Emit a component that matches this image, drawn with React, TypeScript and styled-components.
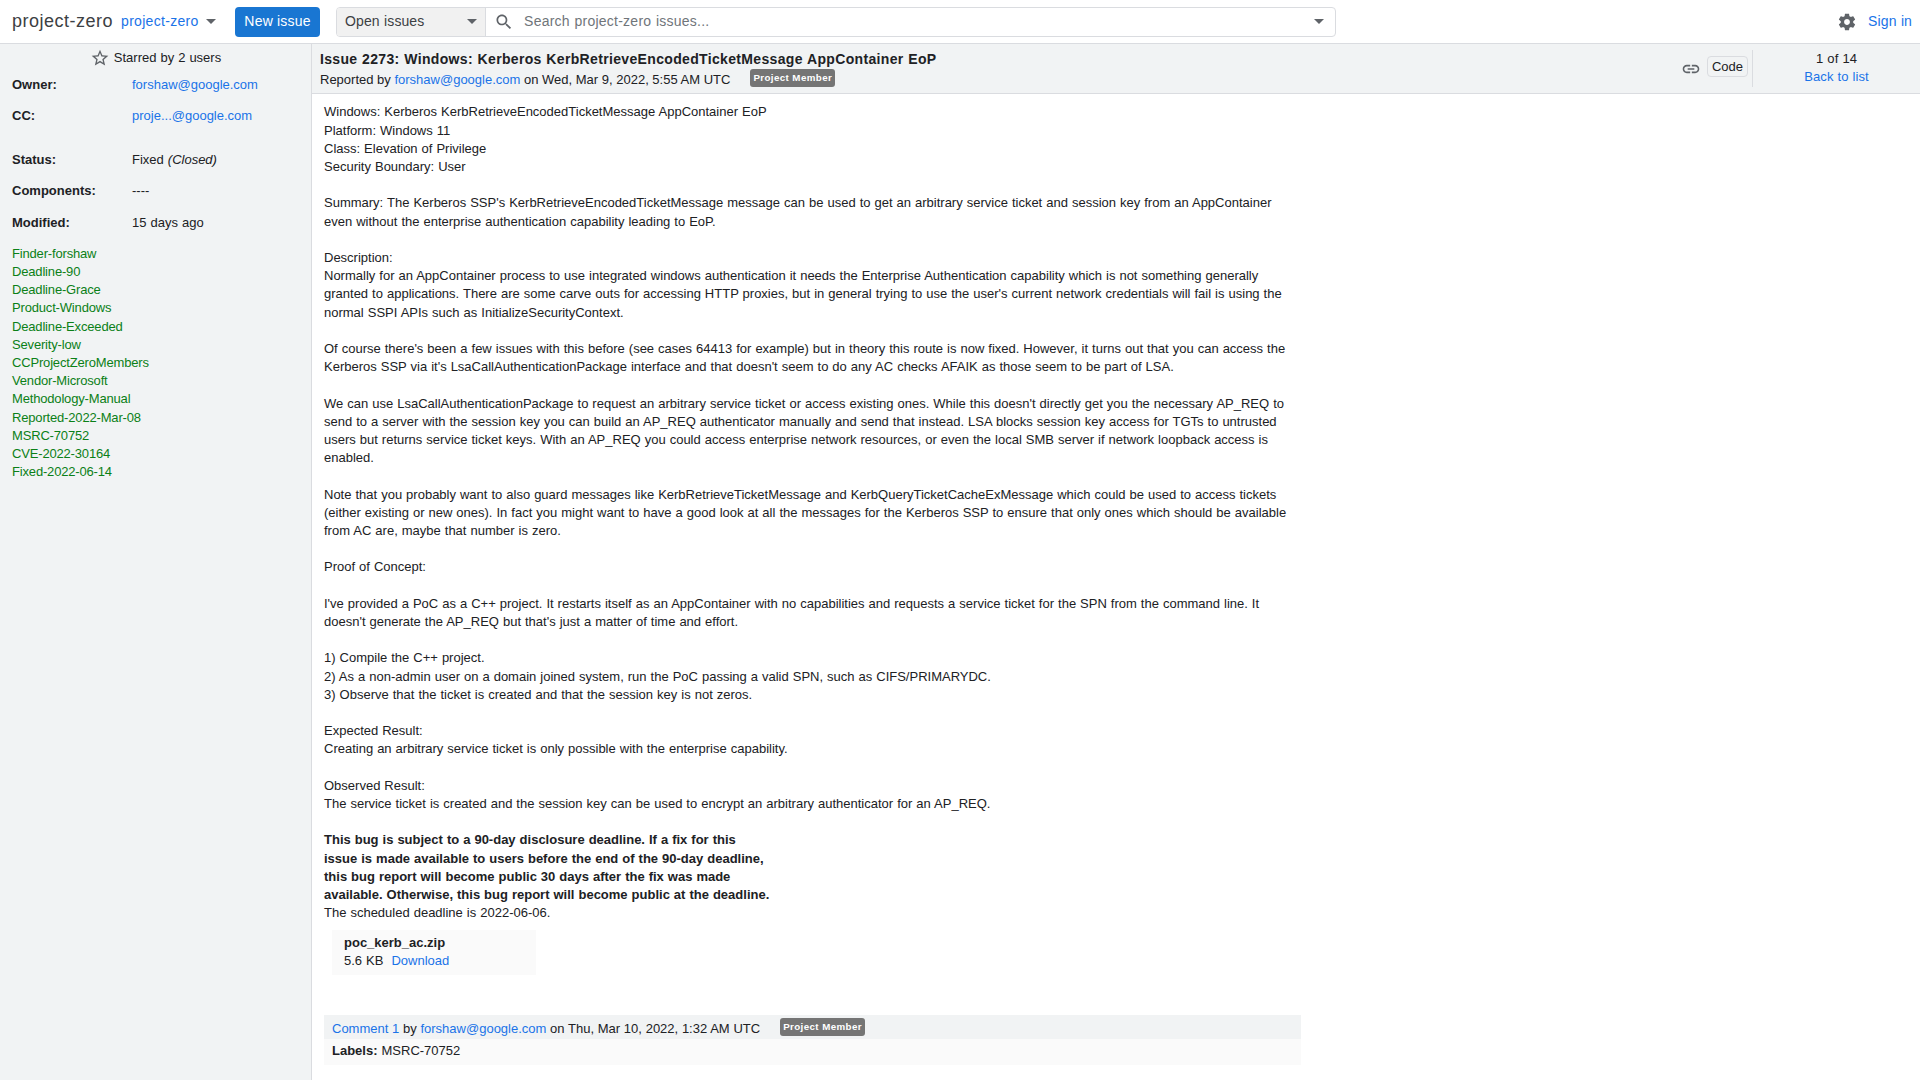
import React from "react"
import styled, { createGlobalStyle } from "styled-components"

const GlobalStyle = createGlobalStyle`
    html, body {
        margin: 0;
        height: 100%;
        overflow: hidden;
    }
    body {
        font-family: "Liberation Sans", Arial, sans-serif;
        font-size: 13px;
        line-height: 18.2px;
        word-spacing: 0.39px;
        color: #202124;
        background: #fff;
    }
`

const Page = styled.div`
    height: 1080px;
    display: flex;
    flex-direction: column;
    overflow: hidden;
`

const Header = styled.header`
    flex: none;
    height: 44px;
    box-sizing: border-box;
    border-bottom: 1px solid #dadce0;
    display: flex;
    align-items: center;
    padding: 0 8px 0 12px;
`

const ProjectName = styled.span`
    font-size: 18px;
    color: #3c4043;
    margin-right: 8px;
    letter-spacing: 0.5px;
`

const Link = styled.a`
    color: #1a73e8;
    text-decoration: none;
`

const ProjectSwitch = styled(Link)`
    font-size: 14px;
    display: flex;
    align-items: center;
    width: 114px;
    letter-spacing: 0.3px;
    white-space: nowrap;
`

const Caret = styled.span`
    display: inline-block;
    flex: none;
    width: 0;
    height: 0;
    border-left: 5px solid transparent;
    border-right: 5px solid transparent;
    border-top: 5px solid #5f6368;
    margin-left: 7px;
`

const NewIssue = styled.button`
    font: inherit;
    font-size: 14px;
    letter-spacing: 0.2px;
    color: #fff;
    background: #1976d2;
    border: none;
    border-radius: 4px;
    height: 30px;
    width: 85px;
    padding: 0;
    margin-right: 16px;
    flex: none;
`

const SearchBar = styled.div`
    width: 1000px;
    height: 30px;
    box-sizing: border-box;
    border: 1px solid #dadce0;
    border-radius: 4px;
    display: flex;
    align-items: center;
    font-size: 14px;
`

const ScopeSelect = styled.div`
    width: 149px;
    height: 100%;
    flex: none;
    padding: 0 8px;
    box-sizing: border-box;
    background: #f1f1f1;
    border-right: 1px solid #dadce0;
    border-radius: 3px 0 0 3px;
    display: flex;
    align-items: center;
    justify-content: space-between;
    color: #3c4043;
    white-space: nowrap;
    letter-spacing: 0.1px;
`

const SearchField = styled.div`
    flex: 1;
    display: flex;
    align-items: center;
    padding: 0 11px 0 8px;
    color: #70757a;
    gap: 10px;
    letter-spacing: 0.25px;
`

const SearchText = styled.span`
    flex: 1;
`

const HeaderRight = styled.div`
    margin-left: auto;
    display: flex;
    align-items: center;
    gap: 11px;
    font-size: 14px;
    letter-spacing: 0.1px;
`

const Columns = styled.div`
    flex: 1;
    min-height: 0;
    display: flex;
`

const Sidebar = styled.aside`
    flex: none;
    width: 312px;
    box-sizing: border-box;
    background: #f1f3f4;
    border-right: 1px solid #dadce0;
    padding: 4px 12px 0;
`

const Stars = styled.div`
    display: flex;
    align-items: center;
    justify-content: center;
    gap: 4px;
    height: 20px;
    margin-bottom: 8px;
`

const MetaGrid = styled.dl`
    display: grid;
    grid-template-columns: 120px 1fr;
    margin: 0;
`

const MetaKey = styled.dt<{ $gap: number }>`
    font-weight: bold;
    margin: 0 0 ${(p) => p.$gap}px;
`

const MetaValue = styled.dd<{ $gap: number }>`
    margin: 0 0 ${(p) => p.$gap}px;
`

const LabelList = styled.div`
    margin-top: -0.3px;
    display: flex;
    flex-direction: column;
    letter-spacing: -0.17px;
`

const LabelLink = styled.a`
    color: #0b8017;
    text-decoration: none;
`

const Main = styled.main`
    flex: 1;
    min-width: 0;
    display: flex;
    flex-direction: column;
`

const IssueHeader = styled.div`
    flex: none;
    height: 50px;
    box-sizing: border-box;
    background: #f1f3f4;
    border-bottom: 1px solid #dadce0;
    display: flex;
    align-items: center;
    padding-left: 8px;
`

const IssueTitles = styled.div`
    flex: 1;
    margin-top: 2px;
`

const IssueTitle = styled.div`
    font-size: 14px;
    font-weight: bold;
    line-height: 18px;
    margin-bottom: 3px;
    letter-spacing: 0.34px;
`

const ReportLine = styled.div`
    display: flex;
    align-items: center;
    word-spacing: 0;
`

const Badge = styled.span`
    font-size: 9.75px;
    font-weight: bold;
    line-height: 14px;
    color: #fff;
    background: #757575;
    border-radius: 3px;
    padding: 2px 3px;
    letter-spacing: 0.4px;
    margin-left: 20px;
    position: relative;
    top: -2px;
`

const CodeGroup = styled.div`
    display: flex;
    align-items: center;
    gap: 6px;
    padding-right: 4px;
`

const CodeButton = styled.span`
    border: 1px solid #dadce0;
    border-radius: 4px;
    padding: 0 4px;
    line-height: 19px;
    margin-bottom: 4px;
`

const Flipper = styled.div`
    width: 167px;
    height: 37px;
    border-left: 1px solid #dadce0;
    display: flex;
    flex-direction: column;
    align-items: center;
    justify-content: center;
    margin-top: -1px;
    letter-spacing: 0.06px;
`

const Content = styled.div`
    width: 977px;
    margin-left: 12px;
    padding-top: 9.3px;
`

const Description = styled.div`
    white-space: pre-wrap;
`

const Attachment = styled.div`
    width: 204px;
    box-sizing: border-box;
    margin: 8px 0 0 8px;
    padding: 3.6px 12px 4.4px;
    background: #fafafa;
`

const AttachName = styled.div`
    font-weight: bold;
`

const DownloadLink = styled(Link)`
    margin-left: 8px;
`

const CommentHead = styled.div`
    margin-top: 40px;
    height: 24px;
    padding: 4px 8px 0;
    box-sizing: border-box;
    background: #f1f3f4;
    display: flex;
    align-items: center;
    word-spacing: 0.1px;
`

const CommentBody = styled.div`
    padding: 3px 8px 4px;
    background: #fafafa;
    height: 19px;
`

const GearIcon = () => (
    <svg width="20" height="20" viewBox="0 0 24 24" fill="#5f6368">
        <path d="M19.43 12.98c.04-.32.07-.64.07-.98s-.03-.66-.07-.98l2.11-1.65c.19-.15.24-.42.12-.64l-2-3.46c-.12-.22-.39-.3-.61-.22l-2.49 1c-.52-.4-1.08-.73-1.69-.98l-.38-2.65C14.46 2.18 14.25 2 14 2h-4c-.25 0-.46.18-.49.42l-.38 2.65c-.61.25-1.17.59-1.69.98l-2.49-1c-.23-.09-.49 0-.61.22l-2 3.46c-.13.22-.07.49.12.64l2.11 1.65c-.04.32-.07.65-.07.98s.03.66.07.98l-2.11 1.65c-.19.15-.24.42-.12.64l2 3.46c.12.22.39.3.61.22l2.49-1c.52.4 1.08.73 1.69.98l.38 2.65c.03.24.24.42.49.42h4c.25 0 .46-.18.49-.42l.38-2.65c.61-.25 1.17-.59 1.69-.98l2.49 1c.23.09.49 0 .61-.22l2-3.46c.12-.22.07-.49-.12-.64l-2.11-1.65zM12 15.5c-1.93 0-3.5-1.57-3.5-3.5s1.57-3.5 3.5-3.5 3.5 1.57 3.5 3.5-1.57 3.5-3.5 3.5z" />
    </svg>
)

const SearchIcon = () => (
    <svg width="20" height="20" viewBox="0 0 24 24" fill="#5f6368">
        <path d="M15.5 14h-.79l-.28-.27C15.41 12.59 16 11.11 16 9.5 16 5.91 13.09 3 9.5 3S3 5.91 3 9.5 5.91 16 9.5 16c1.61 0 3.09-.59 4.23-1.57l.27.28v.79l5 4.99L20.49 19l-4.99-5zm-6 0C7.01 14 5 11.99 5 9.5S7.01 5 9.5 5 14 7.01 14 9.5 11.99 14 9.5 14z" />
    </svg>
)

const StarIcon = () => (
    <svg width="20" height="20" viewBox="0 0 24 24" fill="#5f6368">
        <path d="M22 9.24l-7.19-.62L12 2 9.19 8.63 2 9.24l5.46 4.73L5.82 21 12 17.27 18.18 21l-1.63-7.03L22 9.24zM12 15.4l-3.76 2.27 1-4.28-3.32-2.88 4.38-.38L12 6.1l1.71 4.04 4.38.38-3.32 2.88 1 4.28L12 15.4z" />
    </svg>
)

const LinkIcon = () => (
    <svg width="20" height="20" viewBox="0 0 24 24" fill="#5f6368">
        <path d="M3.9 12c0-1.71 1.39-3.1 3.1-3.1h4V7H7c-2.76 0-5 2.24-5 5s2.24 5 5 5h4v-1.9H7c-1.71 0-3.1-1.39-3.1-3.1zM8 13h8v-2H8v2zm9-6h-4v1.9h4c1.71 0 3.1 1.39 3.1 3.1s-1.39 3.1-3.1 3.1h-4V17h4c2.76 0 5-2.24 5-5s-2.24-5-5-5z" />
    </svg>
)

const labels = [
    "Finder-forshaw",
    "Deadline-90",
    "Deadline-Grace",
    "Product-Windows",
    "Deadline-Exceeded",
    "Severity-low",
    "CCProjectZeroMembers",
    "Vendor-Microsoft",
    "Methodology-Manual",
    "Reported-2022-Mar-08",
    "MSRC-70752",
    "CVE-2022-30164",
    "Fixed-2022-06-14",
]

const descriptionText = `Windows: Kerberos KerbRetrieveEncodedTicketMessage AppContainer EoP
Platform: Windows 11
Class: Elevation of Privilege
Security Boundary: User

Summary: The Kerberos SSP's KerbRetrieveEncodedTicketMessage message can be used to get an arbitrary service ticket and session key from an AppContainer
even without the enterprise authentication capability leading to EoP.

Description:
Normally for an AppContainer process to use integrated windows authentication it needs the Enterprise Authentication capability which is not something generally
granted to applications. There are some carve outs for accessing HTTP proxies, but in general trying to use the user's current network credentials will fail is using the
normal SSPI APIs such as InitializeSecurityContext.

Of course there's been a few issues with this before (see cases 64413 for example) but in theory this route is now fixed. However, it turns out that you can access the
Kerberos SSP via it's LsaCallAuthenticationPackage interface and that doesn't seem to do any AC checks AFAIK as those seem to be part of LSA.

We can use LsaCallAuthenticationPackage to request an arbitrary service ticket or access existing ones. While this doesn't directly get you the necessary AP_REQ to
send to a server with the session key you can build an AP_REQ authenticator manually and send that instead. LSA blocks session key access for TGTs to untrusted
users but returns service ticket keys. With an AP_REQ you could access enterprise network resources, or even the local SMB server if network loopback access is
enabled.

Note that you probably want to also guard messages like KerbRetrieveTicketMessage and KerbQueryTicketCacheExMessage which could be used to access tickets
(either existing or new ones). In fact you might want to have a good look at all the messages for the Kerberos SSP to ensure that only ones which should be available
from AC are, maybe that number is zero.

Proof of Concept:

I've provided a PoC as a C++ project. It restarts itself as an AppContainer with no capabilities and requests a service ticket for the SPN from the command line. It
doesn't generate the AP_REQ but that's just a matter of time and effort.

1) Compile the C++ project.
2) As a non-admin user on a domain joined system, run the PoC passing a valid SPN, such as CIFS/PRIMARYDC.
3) Observe that the ticket is created and that the session key is not zeros.

Expected Result:
Creating an arbitrary service ticket is only possible with the enterprise capability.

Observed Result:
The service ticket is created and the session key can be used to encrypt an arbitrary authenticator for an AP_REQ.

`

const App = () => {
    return (
        <Page>
            <GlobalStyle />
            <Header>
                <ProjectName>project-zero</ProjectName>
                <ProjectSwitch href="#">
                    project-zero
                    <Caret />
                </ProjectSwitch>
                <NewIssue>New issue</NewIssue>
                <SearchBar>
                    <ScopeSelect>
                        Open issues
                        <Caret />
                    </ScopeSelect>
                    <SearchField>
                        <SearchIcon />
                        <SearchText>Search project-zero issues...</SearchText>
                        <Caret />
                    </SearchField>
                </SearchBar>
                <HeaderRight>
                    <GearIcon />
                    <Link href="#">Sign in</Link>
                </HeaderRight>
            </Header>
            <Columns>
                <Sidebar>
                    <Stars>
                        <StarIcon />
                        Starred by 2 users
                    </Stars>
                    <MetaGrid>
                        <MetaKey $gap={13}>Owner:</MetaKey>
                        <MetaValue $gap={13}>
                            <Link href="#">forshaw@google.com</Link>
                        </MetaValue>
                        <MetaKey $gap={26}>CC:</MetaKey>
                        <MetaValue $gap={26}>
                            <Link href="#">proje...@google.com</Link>
                        </MetaValue>
                        <MetaKey $gap={12.6}>Status:</MetaKey>
                        <MetaValue $gap={12.6}>
                            Fixed <em>(Closed)</em>
                        </MetaValue>
                        <MetaKey $gap={13.4}>Components:</MetaKey>
                        <MetaValue $gap={13.4}>----</MetaValue>
                        <MetaKey $gap={13}>Modified:</MetaKey>
                        <MetaValue $gap={13}>15 days ago</MetaValue>
                    </MetaGrid>
                    <LabelList>
                        {labels.map((label) => (
                            <LabelLink key={label} href="#">
                                {label}
                            </LabelLink>
                        ))}
                    </LabelList>
                </Sidebar>
                <Main>
                    <IssueHeader>
                        <IssueTitles>
                            <IssueTitle>
                                Issue 2273: Windows: Kerberos KerbRetrieveEncodedTicketMessage AppContainer EoP
                            </IssueTitle>
                            <ReportLine>
                                <span>
                                    Reported by <Link href="#">forshaw@google.com</Link> on Wed, Mar 9, 2022, 5:55 AM UTC
                                </span>
                                <Badge>Project Member</Badge>
                            </ReportLine>
                        </IssueTitles>
                        <CodeGroup>
                            <LinkIcon />
                            <CodeButton>Code</CodeButton>
                        </CodeGroup>
                        <Flipper>
                            <span>1 of 14</span>
                            <Link href="#">Back to list</Link>
                        </Flipper>
                    </IssueHeader>
                    <Content>
                        <Description>
                            {descriptionText}
                            <b>
                                {`This bug is subject to a 90-day disclosure deadline. If a fix for this
issue is made available to users before the end of the 90-day deadline,
this bug report will become public 30 days after the fix was made
available. Otherwise, this bug report will become public at the deadline.`}
                            </b>
                            {`
The scheduled deadline is 2022-06-06.`}
                        </Description>
                        <Attachment>
                            <AttachName>poc_kerb_ac.zip</AttachName>
                            5.6 KB<DownloadLink href="#">Download</DownloadLink>
                        </Attachment>
                        <CommentHead>
                            <span>
                                <Link href="#">Comment 1</Link> by <Link href="#">forshaw@google.com</Link> on Thu, Mar 10, 2022, 1:32 AM UTC
                            </span>
                            <Badge>Project Member</Badge>
                        </CommentHead>
                        <CommentBody>
                            <b>Labels:</b> MSRC-70752
                        </CommentBody>
                    </Content>
                </Main>
            </Columns>
        </Page>
    )
}

export default App
